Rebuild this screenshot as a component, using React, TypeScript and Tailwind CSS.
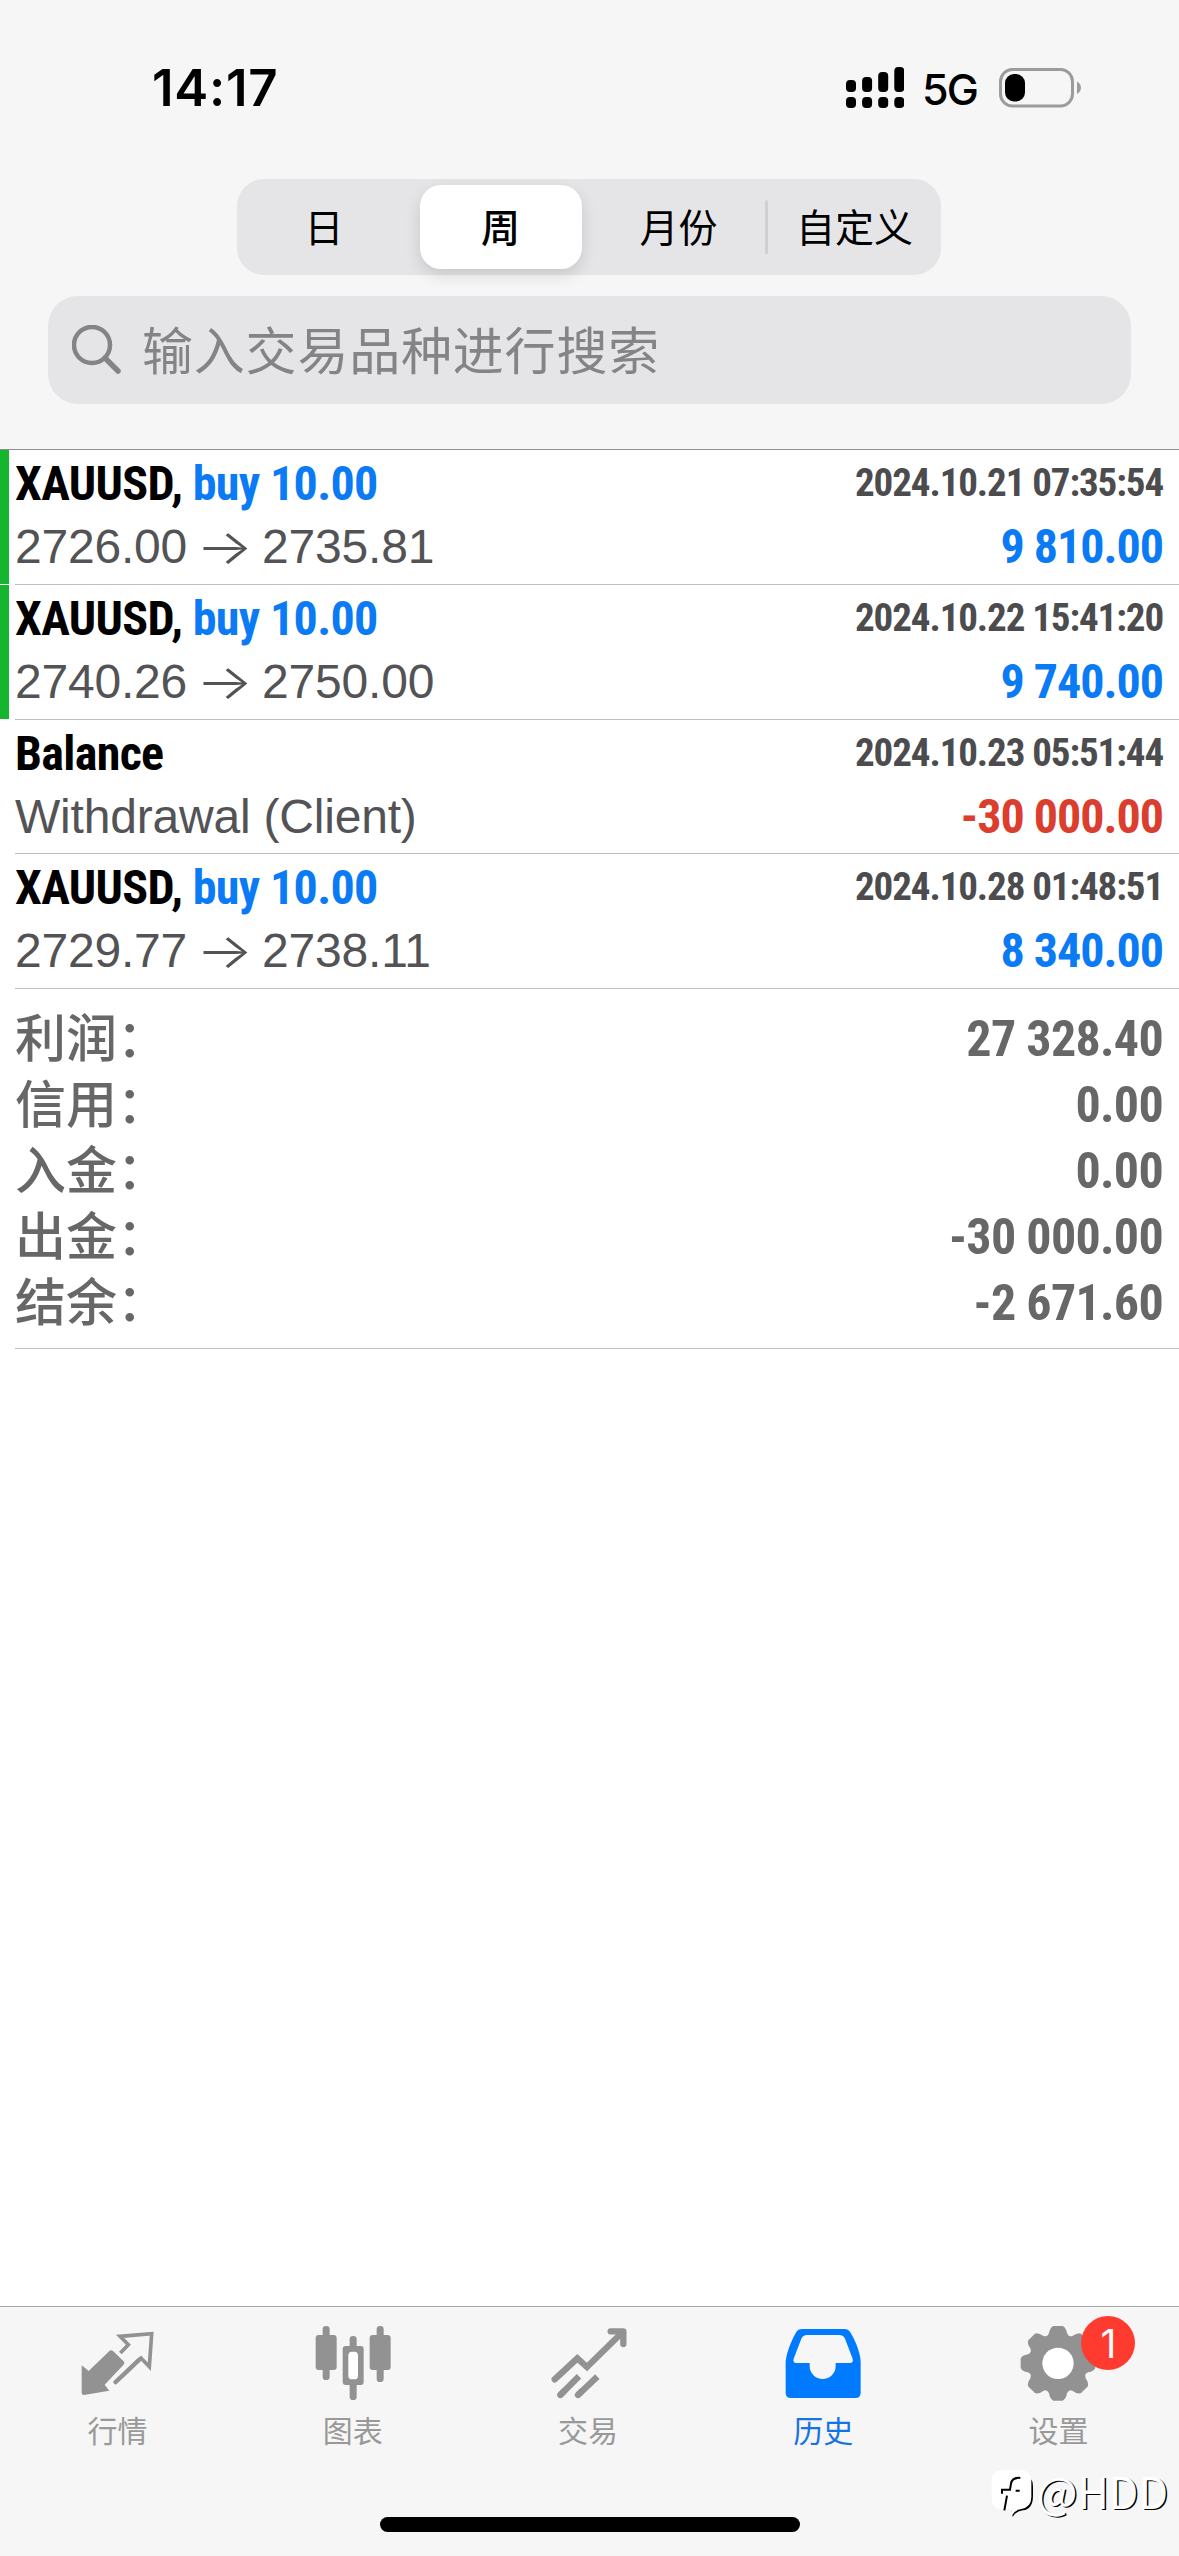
import type { ReactNode } from "react";
import clsx from "clsx";

type Deal = {
  symbol: string;
  action?: string;
  from?: string;
  to?: string;
  comment?: string;
  time: string;
  amount: string;
  closed?: boolean;
};

const deals: Deal[] = [
  { symbol: "XAUUSD,", action: "buy 10.00", from: "2726.00", to: "2735.81", time: "2024.10.21 07:35:54", amount: "9 810.00", closed: true },
  { symbol: "XAUUSD,", action: "buy 10.00", from: "2740.26", to: "2750.00", time: "2024.10.22 15:41:20", amount: "9 740.00", closed: true },
  { symbol: "Balance", comment: "Withdrawal (Client)", time: "2024.10.23 05:51:44", amount: "-30 000.00" },
  { symbol: "XAUUSD,", action: "buy 10.00", from: "2729.77", to: "2738.11", time: "2024.10.28 01:48:51", amount: "8 340.00" },
];

const summary = [
  { label: "利润：", value: "27 328.40" },
  { label: "信用：", value: "0.00" },
  { label: "入金：", value: "0.00" },
  { label: "出金：", value: "-30 000.00" },
  { label: "结余：", value: "-2 671.60" },
];

function SignalIcon() {
  // dual SIM: bars on top, dots below
  const tops = [13, 10, 5, 0];
  return (
    <svg width="58" height="41" viewBox="0 0 58 41" fill="currentColor">
      {tops.map((y, i) => (
        <g key={y}>
          <rect x={i * 16.1} y={y} width="10" height={25 - y} rx="4" />
          <rect x={i * 16.1} y="30" width="10" height="11" rx="4" />
        </g>
      ))}
    </svg>
  );
}

function BatteryIcon() {
  return (
    <svg width="83" height="40" viewBox="0 0 83 40">
      <rect x="1.5" y="1.5" width="72" height="36.5" rx="12" fill="none" stroke="#9c9c9c" strokeWidth="3" />
      <rect x="6" y="6" width="20" height="27.500" rx="9" fill="#000" />
      <path d="M78 13.500 Q82 16 82 19.750 Q82 23.500 78 26 Z" fill="#9c9c9c" />
    </svg>
  );
}

function StatusBar() {
  return (
    <div className="flex h-[179px] items-start justify-between pt-[57px] pr-[97px] pl-[152px] text-black">
      <span className="text-[51px] leading-[62px] font-semibold tracking-[0.7px]">14:17</span>
      <div className="flex items-start">
        <div className="pt-[10px]">
          <SignalIcon />
        </div>
        <span className="mt-1 ml-[18px] w-[58px] text-[43px] leading-[57px] font-medium tracking-[-1.8px]">5G</span>
        <div className="ml-[19px] pt-[11px]">
          <BatteryIcon />
        </div>
      </div>
    </div>
  );
}

function Segments() {
  return (
    <div className="ml-[237px] flex h-24 w-[704px] items-center rounded-[27px] bg-[#e5e5e7] text-[39px] leading-none text-black">
      <div className="w-[174px] text-center">日</div>
      <div className="flex w-[179px] justify-center">
        <div className="flex h-[84px] w-[162px] items-center justify-center rounded-[21px] bg-white font-medium shadow-[0_6px_16px_rgba(0,0,0,0.13)]">
          周
        </div>
      </div>
      <div className="w-[175px] pl-0.5 text-center">月份</div>
      <div className="h-[54px] w-[3px] rounded bg-[#d0d0d2]" />
      <div className="w-[173px] text-center">自定义</div>
    </div>
  );
}

function SearchBar() {
  return (
    <div className="mx-12 mt-[21px] flex h-[108px] items-center rounded-[30px] bg-[#e5e5e7] pl-6 text-[#848486]">
      <svg width="50" height="50" viewBox="0 0 50 50" fill="none" stroke="currentColor" strokeLinecap="round">
        <circle cx="20" cy="20" r="18" strokeWidth="4.500" />
        <path d="M33 33 L46 46" strokeWidth="5.500" />
      </svg>
      <span className="ml-5 pt-0.5 text-[51px] leading-none tracking-[0.8px]">输入交易品种进行搜索</span>
    </div>
  );
}

function DealRow({ deal }: { deal: Deal }) {
  return (
    <div className="flex h-[134.75px]">
      <div className={clsx("mr-[6px] w-[9px] shrink-0", deal.closed && "mb-px bg-[#14b62f]")} />
      <div className="flex flex-1 justify-between border-b border-[#bdbdbf] pr-4 whitespace-nowrap">
        <div className="pt-0.5">
          <div className="font-['Roboto_Condensed'] text-5xl leading-[63px] font-bold tracking-[-0.65px] text-black">
            {deal.symbol}
            {deal.action && <span className="text-[#0a7af5]"> {deal.action}</span>}
          </div>
          <div className="flex font-['Liberation_Sans'] text-[48px] leading-[63px] tracking-[-0.2px] text-[#535356]">
            {deal.comment ?? (
              <>
                <span>{deal.from}</span>
                <span className="w-[75px] scale-x-[1.25] text-center font-['Inter'] font-light">→</span>
                <span>{deal.to}</span>
              </>
            )}
          </div>
        </div>
        <div className="pt-0.5 text-right font-['Roboto_Condensed'] font-bold">
          <div className="text-[39px] leading-[63px] tracking-[-1.1px] text-[#4c4c4f]">{deal.time}</div>
          <div
            className={clsx(
              "text-5xl leading-[63px] tracking-[-1px]",
              deal.amount.startsWith("-") ? "text-[#db3d2e]" : "text-[#0a7af5]",
            )}
          >
            {deal.amount}
          </div>
        </div>
      </div>
    </div>
  );
}

function Summary() {
  return (
    <div className="ml-[15px] border-b border-[#bdbdbf] pt-[17px] pr-4 pb-3 text-[#676767]">
      {summary.map((row) => (
        <div key={row.label} className="flex h-[66px] justify-between leading-[66px]">
          <span className="text-[51px] font-medium">{row.label}</span>
          <span className="font-['Roboto_Condensed'] text-[50px] font-bold tracking-[-0.7px]">{row.value}</span>
        </div>
      ))}
    </div>
  );
}

function QuotesIcon() {
  return (
    <svg width="80" height="80" viewBox="232 99 240 240">
      <path fill="#929292" d="M243 226 L264 243 L326 183 Q331 178 337 183 L368 213 Q374 219 368 225 L312 284 L326 302 L250 315 Q243 315 243 309 Z" />
      <path fill="none" stroke="#929292" strokeWidth="11" d="M359 189 L383 164 L358 139 L453 131 L446 230 L421 204 L341 280" />
      <path stroke="#929292" strokeWidth="13" strokeLinecap="round" d="M345 276 L416 209" />
    </svg>
  );
}

function ChartIcon() {
  return (
    <svg width="80" height="80" viewBox="937 99 240 240" fill="#929292">
      <rect x="966" y="108" width="21" height="162" rx="10" />
      <rect x="945" y="135" width="63" height="105" rx="9" />
      <rect x="1128" y="108" width="21" height="168" rx="10" />
      <rect x="1107" y="135" width="63" height="105" rx="9" />
      <rect x="1047" y="138" width="21" height="192" rx="10" />
      <rect x="1026" y="168" width="63" height="117" rx="9" />
      <rect x="1043" y="185" width="29" height="83" rx="11" fill="#fff" />
    </svg>
  );
}

function TradeIcon() {
  return (
    <svg width="80" height="80" viewBox="202 99 240 240" fill="none" stroke="#929292" strokeWidth="19">
      <path strokeLinecap="round" strokeLinejoin="miter" d="M222 268 L290 205 L319 231 L426 126" />
      <path strokeLinecap="round" strokeLinejoin="round" d="M390 124 H428 V162" />
      <path d="M239 315 L295 259 M292 315 L350 260" />
      <path strokeLinecap="round" d="M239 315 L250 304 M292 315 L303 304" />
    </svg>
  );
}

function HistoryIcon() {
  return (
    <svg width="80" height="80" viewBox="910 99 240 240">
      <path fill="#007aff" d="M918 215 C920 185 942 137 952 123 Q957 117 966 117 H1095 Q1104 117 1109 123 C1120 138 1142 182 1143 215 V308 Q1143 324 1127 324 H934 Q918 324 918 308 Z" />
      <path fill="#f6f6f6" d="M982 135 H1079 Q1091 135 1096 146 L1119 206 Q1122 219 1110 219 H1068 V228 A39 39 0 0 1 990 228 V219 H950 Q939 219 942 206 L965 146 Q970 135 982 135 Z" />
    </svg>
  );
}

function SettingsIcon() {
  const angles = [0, 45, 90, 135, 180, 225, 270, 315];
  return (
    <svg width="80" height="80" viewBox="418 99 240 240" fill="#929292">
      <circle cx="538" cy="220" r="88" />
      {angles.map((a) => (
        <path key={a} transform={`rotate(${a} 538 220)`} d="M498 142 Q508 138 511 130 Q514 112 524 108 H552 Q562 112 565 130 Q568 138 578 142 Z" />
      ))}
      <circle cx="538" cy="220" r="47" fill="#fff" />
    </svg>
  );
}

type Tab = { label: string; icon: ReactNode; active?: boolean; badge?: string };

const tabs: Tab[] = [
  { label: "行情", icon: <QuotesIcon /> },
  { label: "图表", icon: <ChartIcon /> },
  { label: "交易", icon: <TradeIcon /> },
  { label: "历史", icon: <HistoryIcon />, active: true },
  { label: "设置", icon: <SettingsIcon />, badge: "1" },
];

function Watermark() {
  return (
    <div className="absolute right-[11px] bottom-[37px] flex items-start text-white">
      <svg width="44" height="50" viewBox="0 0 132 150">
        <path fill="#000" d="M20 18 H100 Q126 22 126 52 V80 Q126 120 96 124 Q72 128 65 144 L62 124 Z" />
        <path fill="#fff" d="M36 3 H86 Q121 3 121 38 V84 Q121 116 88 121 Q70 124 64 138 L60 121 H36 Q2 121 2 88 V38 Q2 3 36 3 Z" />
        <path fill="none" stroke="#000" strokeWidth="6" d="M88 27 Q64 24 60 44 L57 62 H33 V74 M48 80 L40 124 M74 65 h12" />
      </svg>
      <span className="-mt-1 ml-0.5 font-['Noto_Sans_CJK_SC'] text-[43px] leading-[50px] font-normal [text-shadow:1.5px_1px_0_#000]">@HDD</span>
    </div>
  );
}

function TabBar() {
  return (
    <div className="relative flex h-[250px] flex-col border-t border-[#a8a8aa] bg-[#f6f6f6]">
      <div className="flex pt-4 pr-[3px]">
        {tabs.map((tab) => (
          <div key={tab.label} className={clsx("flex flex-1 flex-col items-center", tab.active ? "text-[#1673e6]" : "text-[#999999]")}>
            <div className="relative">
              {tab.icon}
              {tab.badge && (
                <span className="absolute -top-[7px] left-[63px] flex size-[54px] items-center justify-center rounded-full bg-[#ff3b30] font-['Inter'] text-[39px] leading-none text-white">
                  {tab.badge}
                </span>
              )}
            </div>
            <span className="mt-2 text-[30px] leading-10">{tab.label}</span>
          </div>
        ))}
      </div>
      <div className="mx-auto mt-auto mb-6 h-[15px] w-[420px] rounded-full bg-black" />
      <Watermark />
    </div>
  );
}

export default function App() {
  return (
    <div className="flex h-[2556px] w-[1179px] flex-col overflow-hidden bg-white font-['Inter','Noto_Sans_CJK_SC',sans-serif]">
      <header className="h-[450px] border-b border-[#8e8e91] bg-[#f6f6f6]">
        <StatusBar />
        <Segments />
        <SearchBar />
      </header>
      <main className="flex-1">
        {deals.map((deal) => (
          <DealRow key={deal.time} deal={deal} />
        ))}
        <Summary />
      </main>
      <TabBar />
    </div>
  );
}
